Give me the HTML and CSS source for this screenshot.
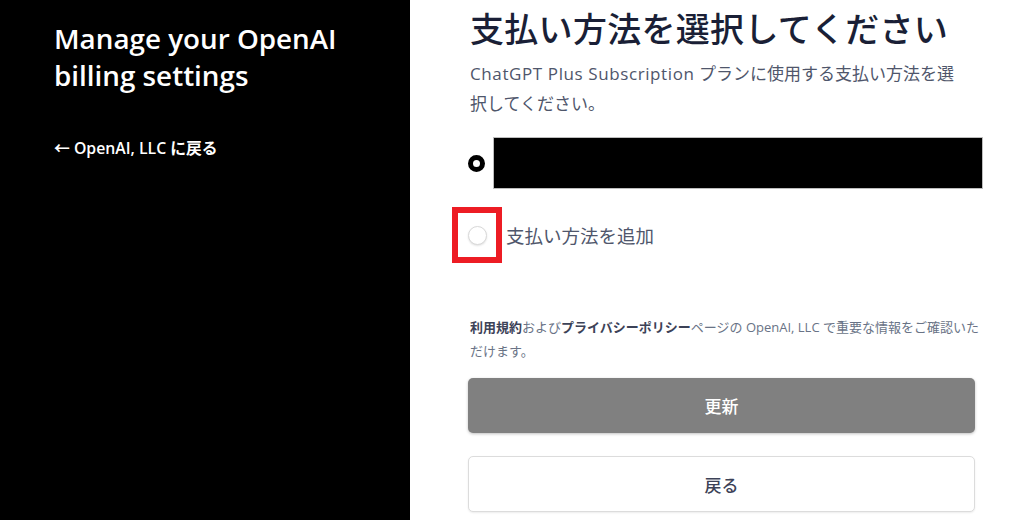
FILE: index.html
```html
<!DOCTYPE html>
<html lang="ja">
<head>
<meta charset="utf-8">
<link rel="stylesheet" href="styles.css">
</head>
<body>
<div class="page">
  <aside class="side">
    <h1 class="side-title">Manage your OpenAI billing settings</h1>
    <a class="back" href="#">← OpenAI, LLC に戻る</a>
  </aside>
  <main class="main">
    <h2 class="title">支払い方法を選択してください</h2>
    <p class="sub"><span class="lat">ChatGPT Plus Subscription</span> <span class="ja">プランに使用する支払い方法を選択してください。</span></p>
    <div class="opt opt-card">
      <span class="radio radio-on"></span>
      <div class="redact"></div>
    </div>
    <div class="opt opt-add">
      <span class="mark"><span class="radio radio-off"></span></span>
      <span class="add-label">支払い方法を追加</span>
    </div>
    <p class="terms"><b class="ja">利用規約</b><span class="ja">および</span><b class="ja">プライバシーポリシー</b><span class="ja">ページの</span> OpenAI, LLC <span class="ja">で重要な情報をご確認いただけます。</span></p>
    <button class="btn btn-primary">更新</button>
    <button class="btn btn-secondary">戻る</button>
  </main>
</div>
</body>
</html>
```
FILE: styles.css
```css
* { box-sizing: border-box; }
html, body { margin: 0; padding: 0; background: #fff; }
body { font-family: "Open Sans", "Noto Sans CJK JP", sans-serif; overflow: hidden; }
.page { display: flex; height: 520px; }
.side {
  width: 410px; flex: none; background: #000; color: #fff;
  padding: 20px 0 0 54px;
}
.side-title {
  margin: 0; font-size: 27.8px; font-weight: 600; line-height: 37px;
  width: 330px;
}
.back {
  display: block; margin-top: 42px; color: #fff; text-decoration: none;
  font-size: 15.8px; font-weight: 600;
}
.main { padding: 5px 0 0 60px; width: 574px; }
.title {
  margin: 0; font-size: 34px; font-weight: 500; color: #1a1f36; line-height: 46px;
  font-family: "Noto Sans CJK JP", sans-serif; letter-spacing: 0.3px;
}
.ja { font-family: "Noto Sans CJK JP", sans-serif; }
.sub {
  margin: 7px 0 0; font-size: 17px; line-height: 29px; color: #4f566b; width: 500px;
}
.sub .lat { letter-spacing: 0.6px; }
.opt { display: flex; align-items: center; }
.opt-card { margin-top: 19px; margin-left: -2px; }
.radio { display: block; border-radius: 50%; flex: none; }
.radio-on { width: 17px; height: 17px; border: 5.5px solid #000; background: #fff; }
.redact {
  margin-left: 8px; width: 490px; height: 52px; background: #000;
  border: 1px solid #bdbdbd;
}
.opt-add { margin-top: 18px; margin-left: -18px; }
.mark {
  display: flex; align-items: center; justify-content: center;
  width: 50px; height: 56px; border: 6px solid #ed1c24;
}
.radio-off {
  width: 19px; height: 19px; border: 1px solid #d9d9d9; background: #fff;
  box-shadow: 0 1px 2px rgba(0,0,0,0.12);
}
.add-label { margin-left: 4px; font-size: 18.5px; color: #4f566b; font-family: "Noto Sans CJK JP", sans-serif; }
.terms {
  margin: 52px 0 0; font-size: 13px; line-height: 24px; color: #697386; width: 510px;
}
.terms b { color: #3c4257; font-weight: 700; }
.btn {
  display: block; width: 507px; height: 55px; margin-left: -2px; border-radius: 5px;
  font-family: "Noto Sans CJK JP", sans-serif; font-size: 17px; font-weight: 500;
  cursor: pointer;
}
.btn-primary {
  margin-top: 15px; background: #808080; color: #fff; border: none;
  box-shadow: 0 1px 3px rgba(0,0,0,0.25);
}
.btn-secondary {
  margin-top: 23px; height: 56px; background: #fff; color: #3c4257; border: 1px solid #dcdcdc;
  box-shadow: 0 1px 2px rgba(0,0,0,0.08);
}
```
